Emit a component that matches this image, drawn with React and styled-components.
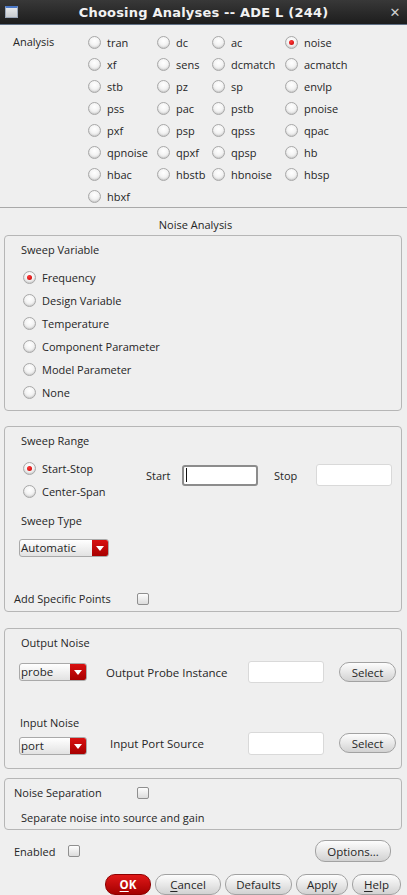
import styled, { createGlobalStyle } from "styled-components";

const Global = createGlobalStyle`
  html, body { margin: 0; padding: 0; background: #efefef; }
  body {
    font-family: "Open Sans", "DejaVu Sans", sans-serif;
    font-size: 11px;
    color: #262626;
  }
`;

const Window = styled.div`
  width: 407px;
  height: 895px;
  overflow: hidden;
  background: #efefef;
  display: flex;
  flex-direction: column;
`;

const TitleBar = styled.div`
  flex: none;
  height: 24px;
  display: grid;
  grid-template-columns: 24px 1fr 24px;
  align-items: center;
  background: linear-gradient(#383838, #1d1d1d);
  border-bottom: 1px solid #5f6f84;
`;

const WinIcon = styled.div`
  width: 11px;
  height: 9px;
  margin-left: 5px;
  border: 1px solid #9aa6b8;
  border-top: 2px solid #4a78c8;
  background: linear-gradient(#e6e8ea, #c9ccd0);
`;

const TitleText = styled.div`
  text-align: center;
  color: #f2f2f2;
  font-family: "DejaVu Sans", sans-serif;
  font-weight: bold;
  font-size: 13px;
  letter-spacing: 0.2px;
`;

const Close = styled.div`
  color: #cfcfcf;
  font-family: "DejaVu Sans", sans-serif;
  font-size: 13px;
  font-weight: bold;
  text-align: center;
`;

const AnalysisArea = styled.div`
  display: flex;
  padding: 6px 0 0 13px;
  height: 176px;
  border-bottom: 1px solid #a9a9a9;
`;

const AnalysisLabel = styled.div`
  width: 75px;
  line-height: 22px;
`;

const AnalysisGrid = styled.div`
  display: grid;
  grid-template-columns: 69px 55px 73px auto;
  grid-auto-rows: 22px;
  align-items: center;
`;

const RadioItem = styled.label`
  display: flex;
  align-items: center;
  gap: 6px;
  height: ${(p) => p.$h || 22}px;
  white-space: nowrap;
`;

const RadioDot = styled.span`
  flex: none;
  width: 11px;
  height: 11px;
  border-radius: 50%;
  border: 1px solid #a8a8a8;
  background: radial-gradient(circle at 50% 35%, #ffffff 0%, #f4f4f4 45%, #d0d0d0 100%);
  box-shadow: inset 0 -1px 1px rgba(0, 0, 0, 0.08);
  display: flex;
  align-items: center;
  justify-content: center;
  &::after {
    content: "";
    width: 5px;
    height: 5px;
    border-radius: 50%;
    background: ${(p) => (p.$on ? "radial-gradient(circle at 40% 35%, #ff3a3a, #c00000)" : "transparent")};
  }
`;

const SectionHeading = styled.div`
  flex: none;
  height: 27px;
  box-sizing: border-box;
  padding: 10px 16px 0 0;
  line-height: 14px;
  text-align: center;
`;

const Group = styled.div`
  flex: none;
  margin: ${(p) => p.$top || 0}px 5px 0 4px;
  border: 1px solid #b6b6b6;
  border-radius: 4px;
  padding-bottom: ${(p) => p.$pb || 0}px;
`;

const GroupTitle = styled.div`
  margin-top: ${(p) => p.$mt || 7}px;
  padding-left: 16px;
  line-height: 14px;
`;

const RadioList = styled.div`
  margin-top: ${(p) => p.$mt || 0}px;
  padding-left: 18px;
  display: flex;
  flex-direction: column;
`;

const RangeRow = styled.div`
  display: flex;
  margin-top: 9px;
`;

const RangeRadios = styled(RadioList)`
  margin-top: 0;
  width: 123px;
`;

const FieldGroup = styled.div`
  display: flex;
  align-items: center;
  margin-top: 7px;
  height: 22px;
`;

const FieldLabel = styled.span`
  width: ${(p) => p.$w}px;
  padding-left: ${(p) => p.$pl || 0}px;
  flex: none;
`;

const TextField = styled.div`
  flex: none;
  box-sizing: border-box;
  width: 76px;
  height: ${(p) => p.$h || 22}px;
  background: #fff;
  border: ${(p) => (p.$focus ? "2px solid #8c8c8c" : "1px solid #d9d9d9")};
  border-radius: 3px;
  display: flex;
  align-items: center;
  padding-left: 2px;
`;

const Caret = styled.span`
  width: 1px;
  height: 14px;
  background: #111;
`;

const SubLabel = styled.div`
  margin-top: ${(p) => p.$mt}px;
  padding-left: ${(p) => p.$pl || 16}px;
  line-height: 14px;
`;

const Dropdown = styled.div`
  box-sizing: border-box;
  width: ${(p) => p.$w}px;
  height: 18px;
  margin: ${(p) => p.$mt || 0}px 0 0 14px;
  display: flex;
  border: 1px solid #a9a9a9;
  border-radius: 3px;
  overflow: hidden;
  background: linear-gradient(#ffffff, #e2e2e2);
`;

const DropText = styled.span`
  flex: 1;
  padding-left: 1px;
  line-height: 16px;
  font-size: 11.5px;
`;

const DropArrow = styled.span`
  width: 16px;
  background: linear-gradient(#d81010, #a80000);
  display: flex;
  align-items: center;
  justify-content: center;
  &::after {
    content: "";
    border-left: 4px solid transparent;
    border-right: 4px solid transparent;
    border-top: 5px solid #fff;
  }
`;

const CheckRow = styled.div`
  display: flex;
  align-items: center;
  margin-top: ${(p) => p.$mt}px;
  padding-left: 9px;
  line-height: 14px;
`;

const CheckLabel = styled.span`
  width: ${(p) => p.$w}px;
  flex: none;
`;

const CheckBox = styled.span`
  width: 10px;
  height: 10px;
  border: 1px solid #8f8f8f;
  border-radius: 2px;
  background: linear-gradient(#fdfdfd, #dcdcdc);
`;

const NoiseRow = styled.div`
  display: grid;
  grid-template-columns: 101px 142px 91px 57px;
  align-items: center;
  margin-top: ${(p) => p.$mt}px;
  height: ${(p) => p.$h}px;
`;

const NoiseLabel = styled.span`
  padding-left: ${(p) => p.$pl || 0}px;
  font-size: 11.5px;
`;

const PillButton = styled.button`
  box-sizing: border-box;
  width: ${(p) => p.$w}px;
  height: ${(p) => p.$h || 21}px;
  padding: 0;
  border: 1px solid ${(p) => (p.$primary ? "#8e0000" : "#a2a2a2")};
  border-radius: 10px;
  background: ${(p) =>
    p.$primary
      ? "linear-gradient(#e01818, #a40000)"
      : "linear-gradient(#fdfdfd, #e8e8e8 50%, #d2d2d2)"};
  color: ${(p) => (p.$primary ? "#fff" : "#262626")};
  font-family: "Open Sans", "DejaVu Sans", sans-serif;
  font-size: 11.5px;
  font-weight: ${(p) => (p.$primary ? "bold" : "normal")};
  text-align: center;
  u { text-decoration-thickness: 1px; text-underline-offset: 2px; }
`;

const Footer = styled.div`
  display: flex;
  align-items: center;
  justify-content: space-between;
  margin-top: 10px;
  height: 22px;
  padding: 0 16px 0 14px;
`;

const EnabledWrap = styled.div`
  display: flex;
  align-items: center;
  gap: 13px;
`;

const ButtonBar = styled.div`
  display: flex;
  justify-content: flex-end;
  gap: 4px;
  margin-top: 12px;
  padding-right: 6px;
`;

const analyses = [
  "tran", "dc", "ac", "noise",
  "xf", "sens", "dcmatch", "acmatch",
  "stb", "pz", "sp", "envlp",
  "pss", "pac", "pstb", "pnoise",
  "pxf", "psp", "qpss", "qpac",
  "qpnoise", "qpxf", "qpsp", "hb",
  "hbac", "hbstb", "hbnoise", "hbsp",
  "hbxf",
];

const sweepVars = [
  "Frequency",
  "Design Variable",
  "Temperature",
  "Component Parameter",
  "Model Parameter",
  "None",
];

const Radio = ({ label, on, h }) => (
  <RadioItem $h={h}>
    <RadioDot $on={on} />
    {label}
  </RadioItem>
);

export default function App() {
  return (
    <Window>
      <Global />
      <TitleBar>
        <WinIcon />
        <TitleText>Choosing Analyses -- ADE L (244)</TitleText>
        <Close>✕</Close>
      </TitleBar>

      <AnalysisArea>
        <AnalysisLabel>Analysis</AnalysisLabel>
        <AnalysisGrid>
          {analyses.map((a) => (
            <Radio key={a} label={a} on={a === "noise"} />
          ))}
        </AnalysisGrid>
      </AnalysisArea>

      <SectionHeading>Noise Analysis</SectionHeading>

      <Group $pb={6}>
        <GroupTitle>Sweep Variable</GroupTitle>
        <RadioList $mt={9}>
          {sweepVars.map((v) => (
            <Radio key={v} label={v} on={v === "Frequency"} h={23} />
          ))}
        </RadioList>
      </Group>

      <Group $top={15} $pb={5}>
        <GroupTitle>Sweep Range</GroupTitle>
        <RangeRow>
          <RangeRadios>
            <Radio label="Start-Stop" on h={23} />
            <Radio label="Center-Span" h={23} />
          </RangeRadios>
          <FieldGroup>
            <FieldLabel $w={36}>Start</FieldLabel>
            <TextField $focus $h={21}>
              <Caret />
            </TextField>
            <FieldLabel $w={42} $pl={16}>Stop</FieldLabel>
            <TextField $h={22} />
          </FieldGroup>
        </RangeRow>
        <SubLabel $mt={11}>Sweep Type</SubLabel>
        <Dropdown $w={90} $mt={11}>
          <DropText>Automatic</DropText>
          <DropArrow />
        </Dropdown>
        <CheckRow $mt={35}>
          <CheckLabel $w={123}>Add Specific Points</CheckLabel>
          <CheckBox />
        </CheckRow>
      </Group>

      <Group $top={16} $pb={13}>
        <GroupTitle $mt={7}>Output Noise</GroupTitle>
        <NoiseRow $mt={11} $h={22}>
          <Dropdown $w={68}>
            <DropText>probe</DropText>
            <DropArrow />
          </Dropdown>
          <NoiseLabel>Output Probe Instance</NoiseLabel>
          <TextField $h={22} />
          <PillButton $w={57} $h={20}>Select</PillButton>
        </NoiseRow>
        <SubLabel $mt={33} $pl={15}>Input Noise</SubLabel>
        <NoiseRow $mt={1} $h={24}>
          <Dropdown $w={68} $mt={6}>
            <DropText>port</DropText>
            <DropArrow />
          </Dropdown>
          <NoiseLabel $pl={4}>Input Port Source</NoiseLabel>
          <TextField $h={23} />
          <PillButton $w={57} $h={20}>Select</PillButton>
        </NoiseRow>
      </Group>

      <Group $top={9} $pb={4}>
        <CheckRow $mt={7}>
          <CheckLabel $w={123}>Noise Separation</CheckLabel>
          <CheckBox />
        </CheckRow>
        <SubLabel $mt={11}>Separate noise into source and gain</SubLabel>
      </Group>

      <Footer>
        <EnabledWrap>
          <span>Enabled</span>
          <CheckBox />
        </EnabledWrap>
        <PillButton $w={76} $h={22}>Options...</PillButton>
      </Footer>

      <ButtonBar>
        <PillButton $primary $w={46}><u>O</u>K</PillButton>
        <PillButton $w={66}><u>C</u>ancel</PillButton>
        <PillButton $w={67}>Defaults</PillButton>
        <PillButton $w={52}>Apply</PillButton>
        <PillButton $w={49}><u>H</u>elp</PillButton>
      </ButtonBar>
    </Window>
  );
}
